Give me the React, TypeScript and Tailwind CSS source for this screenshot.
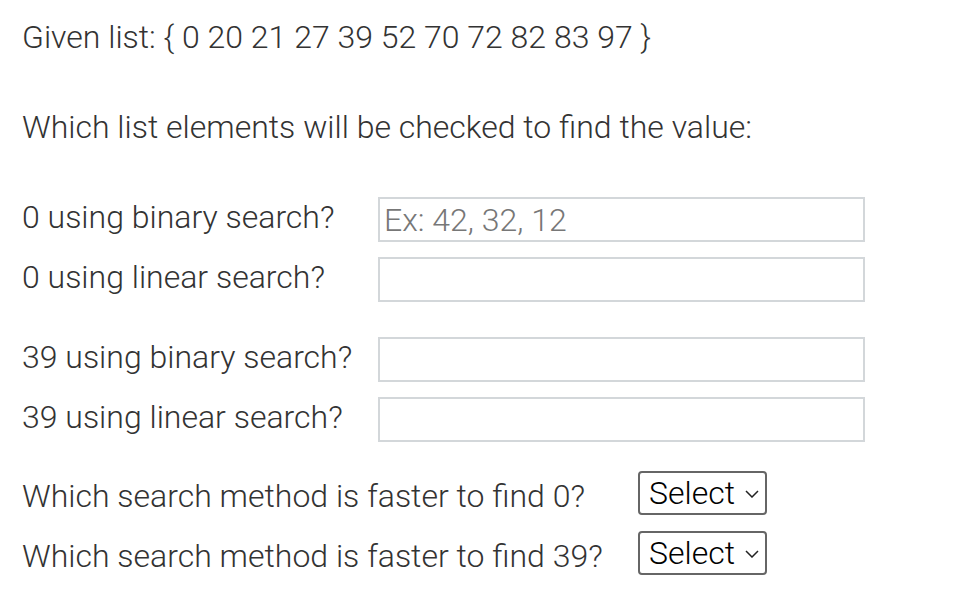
import React from 'react';

const inputCls =
  'h-[45px] w-[487px] border-2 border-[#d3d7da] bg-white px-1 text-[32px] font-light text-[#333] placeholder:text-[#777] outline-none';

const SelectBox: React.FC = () => (
  <div className="relative">
    <select
      defaultValue=""
      className="h-[44px] w-[129px] appearance-none rounded-[4px] border-2 border-[#666] bg-white pl-[9px] text-[32px] text-black outline-none"
      style={{ fontFamily: 'Roboto, sans-serif' }}
    >
      <option value="">Select</option>
      <option value="binary">Binary search</option>
      <option value="linear">Linear search</option>
    </select>
    <svg
      className="pointer-events-none absolute right-[8px] top-[19px]"
      width="14"
      height="8"
      viewBox="0 0 14 8"
      fill="none"
    >
      <path d="M1 1l6 6 6-6" stroke="#222" strokeWidth="1.5" />
    </svg>
  </div>
);

const InputRow: React.FC<{ label: string; placeholder?: string }> = ({ label, placeholder }) => (
  <div className="flex items-center">
    <label className="mb-[6px] w-[356px] shrink-0 leading-[34px]">{label}</label>
    <input type="text" placeholder={placeholder} className={inputCls} />
  </div>
);

const SelectRow: React.FC<{ label: string }> = ({ label }) => (
  <div className="flex items-center">
    <label className="mt-[6px] w-[616px] shrink-0 leading-[34px]">{label}</label>
    <SelectBox />
  </div>
);

export default function App() {
  return (
    <div
      className="min-h-[598px] w-[966px] bg-white pl-[22px] pt-[17px] text-[32px] font-light leading-[40px] text-[#333]"
      style={{ fontFamily: 'Roboto, sans-serif' }}
    >
      <p>Given list: {'{'} 0 20 21 27 39 52 70 72 82 83 97 {'}'}</p>
      <p className="mt-[50px]">Which list elements will be checked to find the value:</p>

      <div className="mt-[50px] flex flex-col gap-[15px]">
        <InputRow label="0 using binary search?" placeholder="Ex: 42, 32, 12" />
        <InputRow label="0 using linear search?" />
      </div>

      <div className="mt-[35px] flex flex-col gap-[15px]">
        <InputRow label="39 using binary search?" />
        <InputRow label="39 using linear search?" />
      </div>

      <div className="mt-[29px] flex flex-col gap-[16px]">
        <SelectRow label="Which search method is faster to find 0?" />
        <SelectRow label="Which search method is faster to find 39?" />
      </div>
    </div>
  );
}
